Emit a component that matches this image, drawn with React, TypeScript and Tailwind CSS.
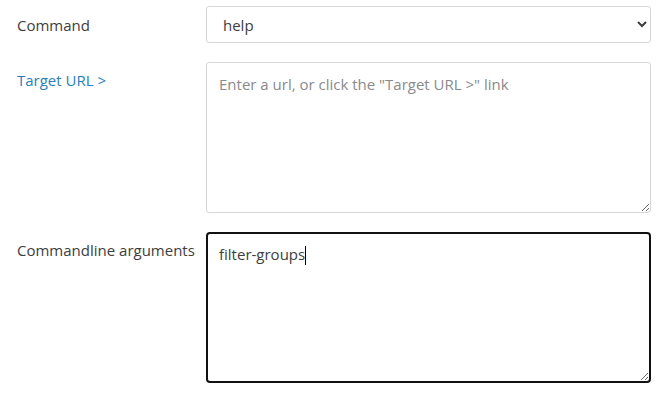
import React from "react";

const FONT = "'Open Sans', 'Noto Sans', sans-serif";

export default function App() {
  return (
    <div
      className="w-[671px] h-[402px] bg-white pt-[6px] pl-[17px] pr-[20px] flex flex-col gap-[19px] text-[15px] leading-5 text-[#3d3d3d]"
      style={{ fontFamily: FONT }}
    >
      <div className="flex">
        <label className="w-[189px] shrink-0 pt-[9px]">Command</label>
        <select
          defaultValue="help"
          className="flex-1 h-[37px] border border-[#d6d6d6] rounded-[3px] bg-white pl-[12px] pr-[6px] text-[#3d3d3d] outline-none"
          style={{ fontFamily: FONT, fontSize: 15 }}
        >
          <option value="help">help</option>
          <option value="version">version</option>
        </select>
      </div>
      <div className="flex">
        <a className="w-[189px] shrink-0 pt-[8px] text-[#2980b9] cursor-pointer">Target URL &gt;</a>
        <textarea
          className="flex-1 h-[151px] border border-[#d6d6d6] rounded-[3px] bg-white px-[12px] pt-[11px] text-[#3d3d3d] placeholder:text-[#8a8a8a] outline-none resize-y"
          placeholder={'Enter a url, or click the "Target URL >" link'}
        />
      </div>
      <div className="flex">
        <label className="w-[189px] shrink-0 pt-[8px]">Commandline arguments</label>
        <div className="relative flex-1 flex">
          <textarea
            defaultValue="filter-groups"
            className="flex-1 h-[151px] border-2 border-[#111111] rounded-[4px] bg-white px-[11px] pt-[10px] text-[#3d3d3d] outline-none resize-y"
          />
          <div className="pointer-events-none absolute left-0 top-0 px-[13px] pt-[12px] whitespace-pre">
            <span className="invisible">filter-groups</span>
            <span className="inline-block w-px h-[19px] bg-black align-[-5px]" />
          </div>
        </div>
      </div>
    </div>
  );
}
